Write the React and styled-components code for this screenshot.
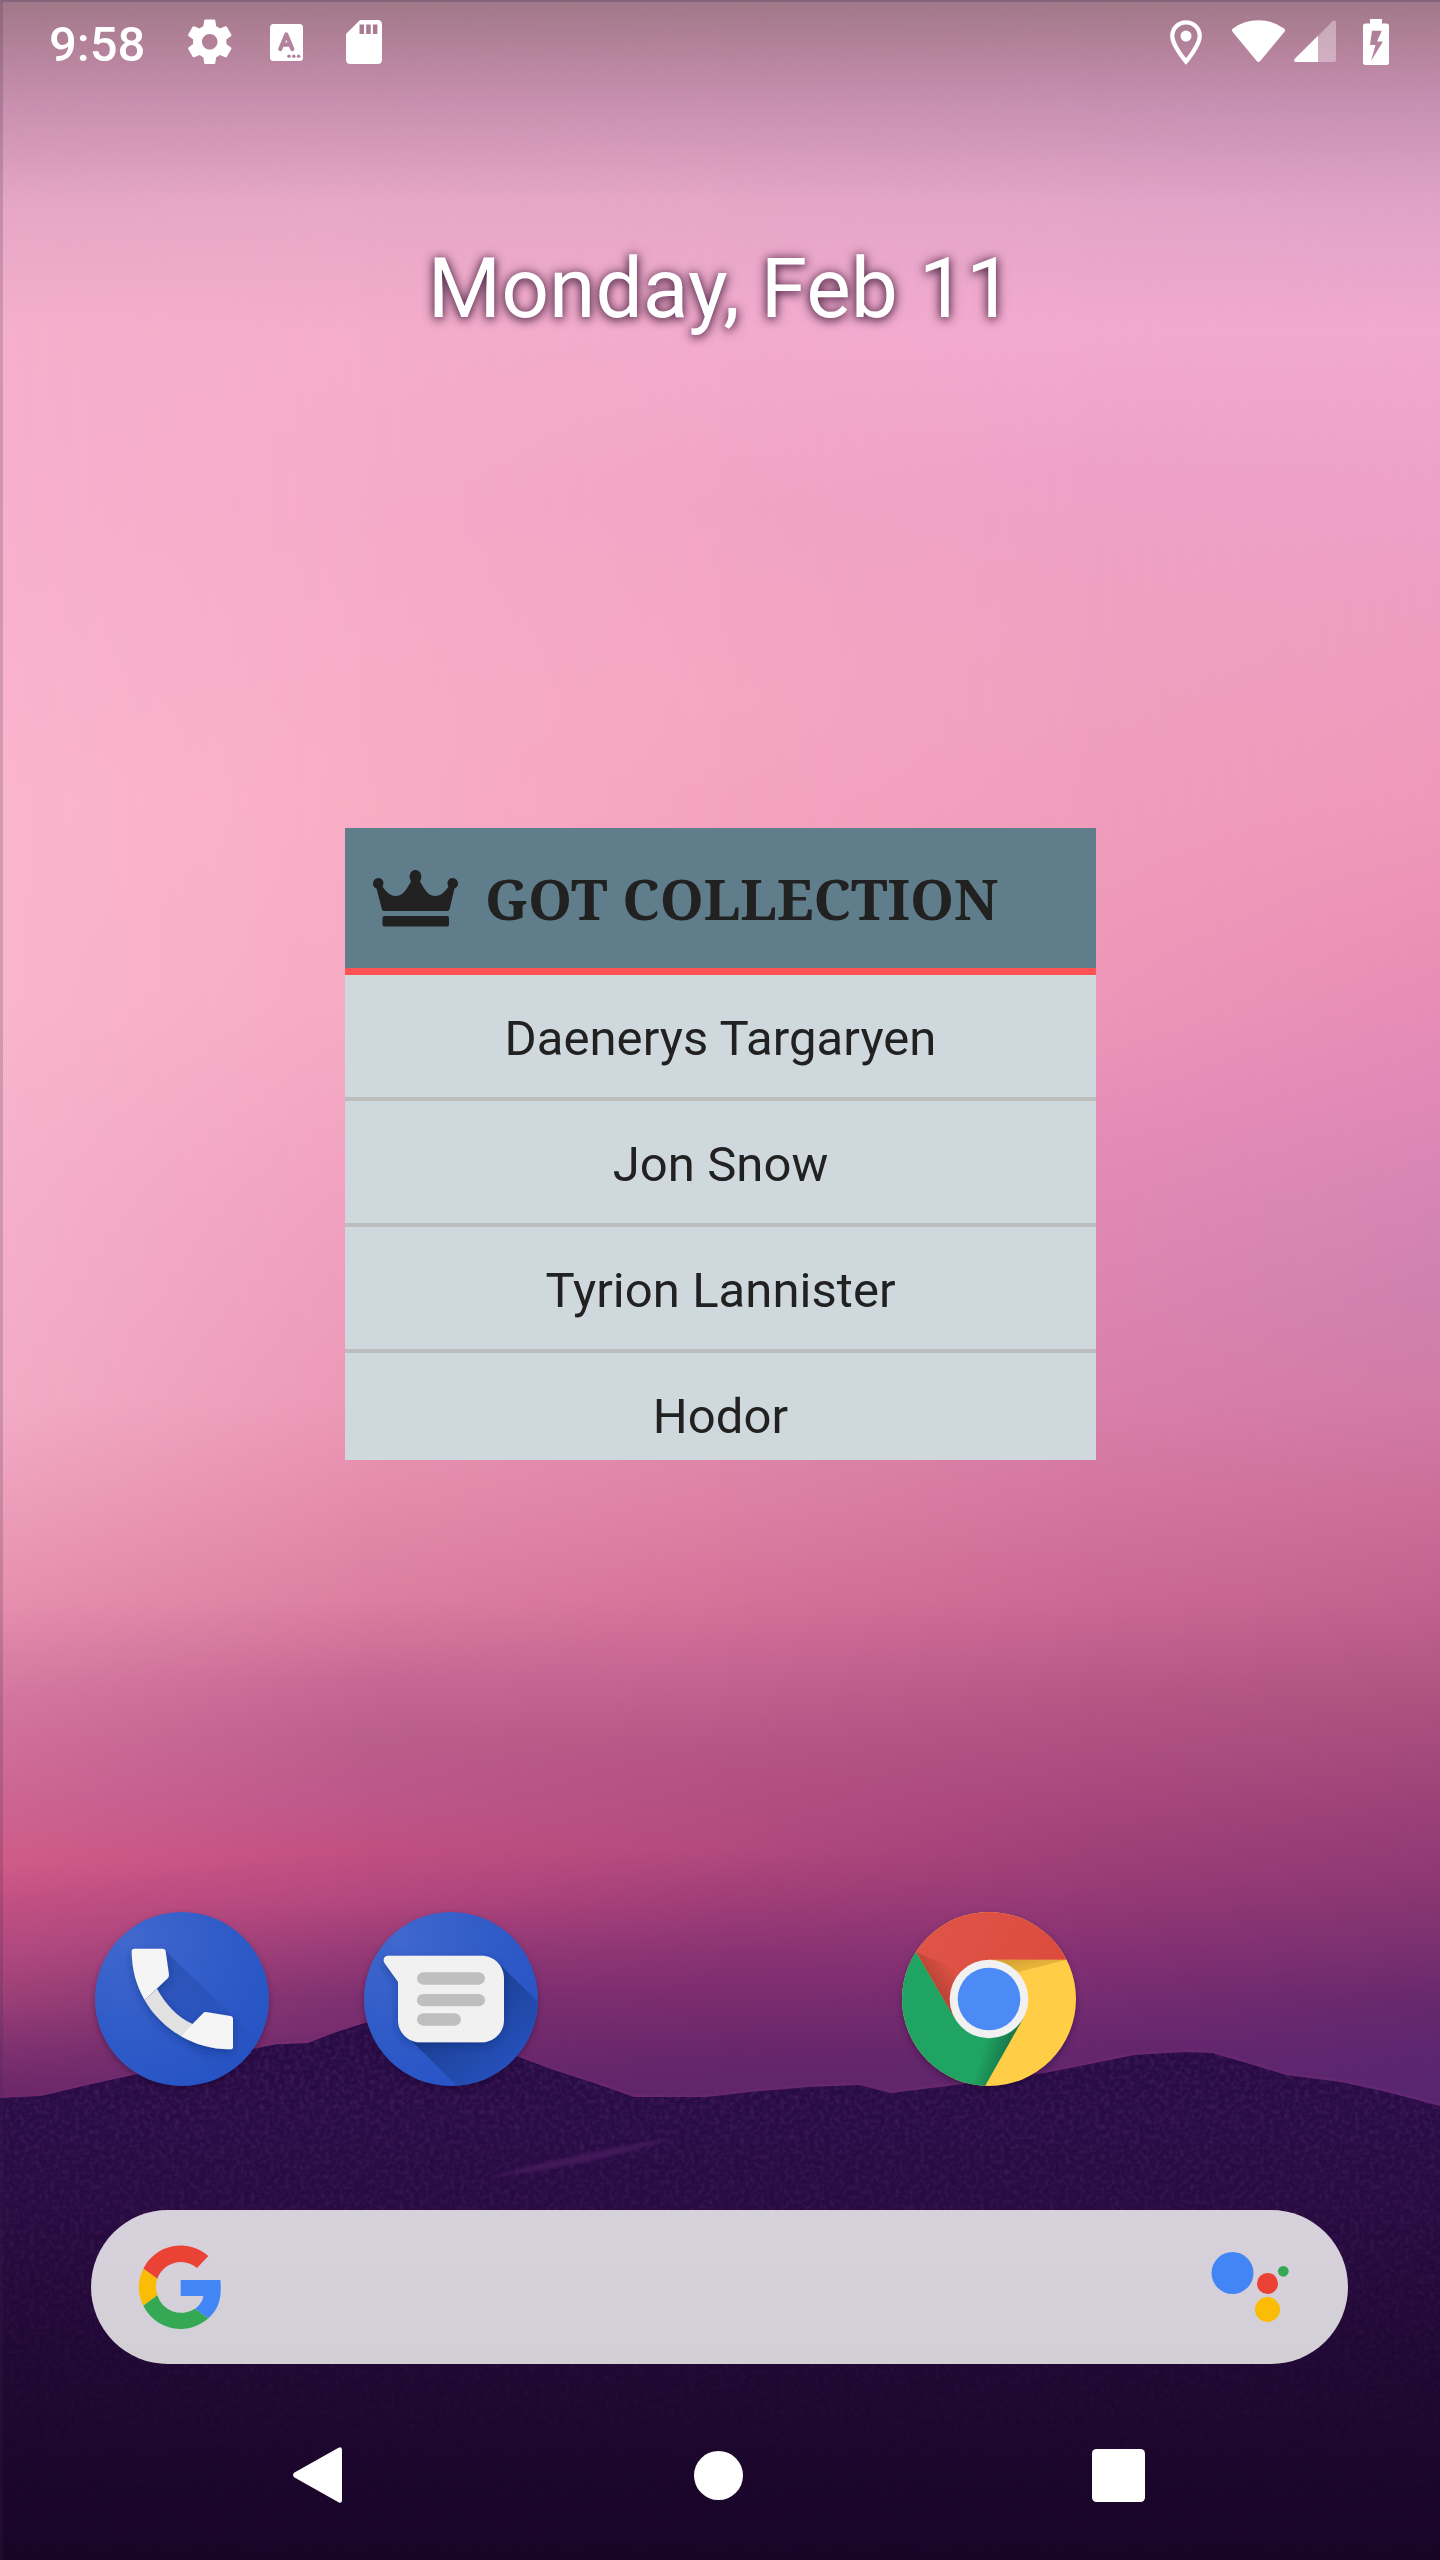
import React from "react";
import styled, { createGlobalStyle } from "styled-components";

const GlobalStyle = createGlobalStyle`
  html, body { margin: 0; padding: 0; background: #190525; }
  * { box-sizing: border-box; }
`;

/* ---------- wallpaper ---------- */

const columns = [
  [[0, "#a07888"], [50, "#b5839c"], [100, "#c78fad"], [200, "#e5a6c5"], [330, "#f5b0cc"], [500, "#f7b0cd"], [800, "#fab6cd"], [1000, "#f9b6cc"], [1200, "#f5b0ca"], [1400, "#f3acc5"], [1500, "#ed9fba"], [1600, "#e790ae"], [1700, "#d3769f"], [1800, "#cd6592"], [1860, "#d05c89"], [1900, "#c35183"], [1950, "#b14a80"], [2000, "#9b3f77"], [2050, "#7e3170"], [2095, "#6c2769"]],
  [[0, "#a07888"], [50, "#b5839c"], [100, "#c78fad"], [200, "#e6a7c6"], [330, "#f4adcb"], [500, "#f5abc9"], [800, "#f9adc5"], [1000, "#f6aac4"], [1200, "#f0a0bf"], [1400, "#eb98b6"], [1500, "#e58caa"], [1600, "#db7fa0"], [1680, "#c76894"], [1740, "#bb5e8b"], [1800, "#bd578a"], [1850, "#c15081"], [1900, "#b4477f"], [1950, "#973b77"], [2000, "#7d3070"], [2080, "#67276a"]],
  [[0, "#a07888"], [50, "#b5839c"], [100, "#c78fae"], [200, "#e5a6c6"], [330, "#f2abcd"], [500, "#f2a4c5"], [700, "#f5a6c1"], [820, "#f4a3bf"], [1200, "#e998b6"], [1400, "#e28bac"], [1500, "#dd81a5"], [1600, "#d57399"], [1680, "#c36391"], [1750, "#b55585"], [1850, "#b24a7e"], [1900, "#a03e78"], [1950, "#8b3474"], [2000, "#7a2c6e"], [2060, "#66266b"], [2100, "#5f256a"]],
  [[0, "#a07888"], [50, "#b5839c"], [100, "#c68fb0"], [200, "#e2a4c7"], [330, "#f2aacf"], [480, "#eea1c7"], [650, "#f0a0c0"], [820, "#f09dbc"], [1000, "#ee97b9"], [1150, "#e48cb7"], [1300, "#dd85b1"], [1400, "#da80aa"], [1500, "#d3759f"], [1600, "#cb6a94"], [1700, "#b55685"], [1800, "#a8477d"], [1880, "#9a3c76"], [1950, "#863174"], [2000, "#752c71"], [2050, "#66266d"], [2100, "#5d266c"]],
  [[0, "#a07888"], [50, "#b5839c"], [100, "#c58fb1"], [200, "#dfa2c8"], [330, "#f1a9ce"], [480, "#eda1c9"], [600, "#ee9dc1"], [800, "#ef99b9"], [950, "#ea8fb5"], [1100, "#e088b7"], [1200, "#d585b3"], [1300, "#cf80ad"], [1400, "#d17ba6"], [1500, "#cb6e98"], [1600, "#c1628e"], [1700, "#ad527f"], [1800, "#9c4279"], [1880, "#8d3873"], [1950, "#78306f"], [2000, "#67286c"], [2060, "#5c2671"], [2110, "#582770"]],
];

const WallpaperLayer = styled.div`
  position: absolute;
  inset: 0;
  z-index: -1;
  background: #66266a;
`;

const SkyColumn = styled.div`
  position: absolute;
  inset: 0;
  background: linear-gradient(to bottom, ${(p) => p.$stops.map(([y, c]) => `${c} ${y}px`).join(", ")});
  ${(p) =>
    p.$index > 0 &&
    `mask-image: linear-gradient(to right, transparent ${(p.$index - 1) * 360}px, #000 ${p.$index * 360}px);`}
`;

const Ridge = styled.svg`
  position: absolute;
  left: 0;
  bottom: 0;
  display: block;
`;

const ScreenEdge = styled.div`
  position: absolute;
  inset: 0;
  border-top: 2px solid rgba(60, 40, 80, 0.25);
  border-left: 3px solid rgba(60, 40, 70, 0.2);
`;

function Wallpaper() {
  const outline =
    "M0 98L41 96L92 84L138 74L190 64L248 50L275 44.5L308 43L335 32.500L365 23L400 19L440 24L480 40L519 57L551 69L597 84L634 97L707 97L750 92L808 87L859 85L891 93L964 84L1047 72.600L1095 63L1134 55L1185 52L1212 53L1250 64L1286 75L1341 82L1387 92L1440 106V580H0Z";
  return (
    <WallpaperLayer>
      {columns.map((stops, i) => (
        <SkyColumn key={i} $stops={stops} $index={i} />
      ))}
      <Ridge width="1440" height="560" viewBox="0 0 1440 560">
        <defs>
          <linearGradient id="ground" x1="0" y1="0" x2="0" y2="560" gradientUnits="userSpaceOnUse">
            <stop offset="0.03" stopColor="#270a44" />
            <stop offset="0.2" stopColor="#290c46" />
            <stop offset="0.38" stopColor="#270b41" />
            <stop offset="0.67" stopColor="#1f0832" />
            <stop offset="1" stopColor="#180526" />
          </linearGradient>
          <linearGradient id="grainFade" x1="0" y1="0" x2="0" y2="1">
            <stop offset="0" stopColor="#fff" />
            <stop offset="0.4" stopColor="#fff" stopOpacity="0.6" />
            <stop offset="0.8" stopColor="#fff" stopOpacity="0.1" />
          </linearGradient>
          <mask id="grainMask">
            <path d={outline} fill="url(#grainFade)" />
          </mask>
          <filter id="grain" x="0" y="0" width="100%" height="100%">
            <feTurbulence type="fractalNoise" baseFrequency="0.2" numOctaves="3" seed="4" />
            <feColorMatrix values="0 0 0 0 0.36  0 0 0 0 0.12  0 0 0 0 0.38  1.6 0 0 0 -0.62" />
          </filter>
          <filter id="soft"><feGaussianBlur stdDeviation="1.6" /></filter>
        </defs>
        <g transform="translate(0 -2)">
          <path d={outline} fill="none" stroke="#7a2f78" strokeWidth="3" opacity="0.5" filter="url(#soft)" transform="translate(0 2)" />
          <path d={outline} fill="url(#ground)" transform="translate(0 2)" />
        </g>
        <g mask="url(#grainMask)"><rect width="1440" height="560" filter="url(#grain)" opacity="0.26" /></g>
        <path d="M486 178Q560 156 676 137Q600 164 486 178Z" fill="#4a1b60" opacity="0.75" filter="url(#soft)" />
      </Ridge>
      <ScreenEdge />
    </WallpaperLayer>
  );
}

/* ---------- layout ---------- */

const Screen = styled.main`
  position: relative;
  z-index: 0;
  display: flex;
  flex-direction: column;
  width: 1440px;
  height: 2560px;
  overflow: hidden;
  font-family: Roboto, "Liberation Sans", sans-serif;
`;

const Icon = styled.svg`
  display: block;
  flex: none;
  overflow: visible;
`;

const StatusBar = styled.header`
  display: flex;
  justify-content: space-between;
  height: 84px;
  padding: 0 51px 0 49px;
  color: #fff;
`;

const StatusGroup = styled.div`
  display: flex;
  align-items: center;
`;

const Clock = styled.time`
  width: 122px;
  padding-top: 5px;
  font-size: 49px;
  font-weight: 500;
  line-height: 58px;
`;

const NotificationSlot = styled.span`
  display: flex;
  justify-content: center;
  width: 77px;
`;

const SystemIcon = styled(Icon)`
  margin-left: ${(p) => p.$gap}px;
`;

const DateLabel = styled.h1`
  margin: 156px 0 0;
  padding-left: 1px;
  font-size: 84px;
  font-weight: 400;
  line-height: 98px;
  height: 98px;
  text-align: center;
  color: #fff;
  text-shadow: 0 1px 12px rgba(50, 15, 45, 0.75), 0 2px 8px rgba(50, 15, 45, 0.55);
`;

const Widget = styled.section`
  width: 751px;
  height: 632px;
  margin: 490px 0 0 345px;
  overflow: hidden;
  background: #cfd8dd;
  color: #212121;
`;

const WidgetHeader = styled.header`
  display: flex;
  align-items: center;
  gap: 27px;
  height: 147px;
  padding-left: 28px;
  border-bottom: 7px solid #ff5252;
  background: #607d8b;
`;

const WidgetTitle = styled.h2`
  margin: 0;
  font-family: "Noto Serif", "DejaVu Serif Condensed", "DejaVu Serif", serif;
  font-size: 56px;
  font-weight: 700;
  line-height: 76px;
  white-space: nowrap;
`;

const NameList = styled.ul`
  margin: 0;
  padding: 0;
  list-style: none;
`;

const NameRow = styled.li`
  height: 126px;
  padding-top: 5px;
  border-bottom: 4px solid #bdbdbd;
  font-size: 49px;
  line-height: 118px;
  letter-spacing: 0.05px;
  text-align: center;
`;

const Dock = styled.nav`
  display: grid;
  grid-template-columns: repeat(5, 269px);
  justify-content: center;
  justify-items: center;
  height: 174px;
  margin-top: 452px;
`;

const AppIcon = styled(Icon)`
  grid-column: ${(p) => p.$column};
  border-radius: 50%;
  overflow: hidden;
  box-shadow: 0 3px 6px rgba(20, 0, 40, 0.35);
`;

const SearchBar = styled.div`
  display: flex;
  align-items: center;
  justify-content: space-between;
  width: 1257px;
  height: 154px;
  margin: 124px 0 0 91px;
  padding: 0 59px 0 48px;
  border-radius: 77px;
  background: linear-gradient(#d7d1dc, #d5d0da 50%, #d2d0d5);
`;

const NavBar = styled.nav`
  display: flex;
  justify-content: space-between;
  align-items: center;
  height: 56px;
  margin-top: 83px;
  padding: 0 295px 0 292px;
`;

const HomeButton = styled(Icon)`
  margin-left: 3px;
`;

/* ---------- app icons ---------- */

const PhoneIcon = () => (
  <AppIcon $column={1} width="174" height="174" viewBox="45 66 522 522">
    <defs>
      <radialGradient id="blueDisc" cx="0.2" cy="0.15" r="0.95">
        <stop offset="0" stopColor="#4068cd" />
        <stop offset="0.6" stopColor="#2f5bc8" />
        <stop offset="1" stopColor="#2754c5" />
      </radialGradient>
      <linearGradient id="phoneShade" x1="240" y1="230" x2="440" y2="530" gradientUnits="userSpaceOnUse">
        <stop offset="0" stopColor="#1c3e9a" stopOpacity="0.4" />
        <stop offset="1" stopColor="#1c3e9a" stopOpacity="0.05" />
      </linearGradient>
      <filter id="lift" x="-30%" y="-30%" width="160%" height="160%">
        <feDropShadow dx="0" dy="10" stdDeviation="12" floodColor="#102a70" floodOpacity="0.4" />
      </filter>
    </defs>
    <rect x="45" y="66" width="522" height="522" fill="url(#blueDisc)" />
    <path d="M255 182L560 472L440 600L302 438L194 330Z" fill="url(#phoneShade)" />
    <g filter="url(#lift)">
      <path d="M194 330L231 296C255 340 290 380 339 403L302 438C255 410 220 375 194 330Z" fill="#e1e1e1" />
      <path d="M163 176H248Q256 176 257 184L267 255Q267 260 264 264L194 330C168 285 156 240 155 184Q155 176 163 176Z" fill="#f5f5f5" />
      <path d="M378 366L451 378Q459 379 459 387V470Q459 478 450 478C395 478 345 463 302 438L370 369Q373 365 378 366Z" fill="#f5f5f5" />
    </g>
  </AppIcon>
);

const MessagesIcon = () => (
  <AppIcon $column={2} width="174" height="174" viewBox="852 66 522 522">
    <defs>
      <linearGradient id="messageShade" x1="1120" y1="330" x2="1290" y2="520" gradientUnits="userSpaceOnUse">
        <stop offset="0" stopColor="#1c3f91" />
        <stop offset="1" stopColor="#2550ba" />
      </linearGradient>
    </defs>
    <rect x="852" y="66" width="522" height="522" fill="url(#blueDisc)" />
    <path d="M1250 215L1400 360V600H1143L980 437Z" fill="url(#messageShade)" />
    <g filter="url(#lift)">
      <path d="M924 197H1205C1242 197 1272 227 1272 264V390C1272 427 1242 457 1205 457H1021C984 457 954 427 954 390V275L915 221C907 210 912 197 924 197Z" fill="#f1f1f1" />
    </g>
    <g fill="#bfbfbf">
      <rect x="1011" y="247" width="204" height="37" rx="18.5" />
      <rect x="1011" y="312" width="204" height="37" rx="18.5" />
      <rect x="1011" y="370" width="132" height="37" rx="18.5" />
    </g>
  </AppIcon>
);

const ChromeIcon = () => (
  <AppIcon $column={4} width="174" height="174" viewBox="66 66 522 522">
    <defs>
      <linearGradient id="redShade" x1="165" y1="285" x2="225" y2="242" gradientUnits="userSpaceOnUse">
        <stop offset="0" stopColor="#9c3a2c" stopOpacity="0.55" />
        <stop offset="1" stopColor="#9c3a2c" stopOpacity="0" />
      </linearGradient>
      <linearGradient id="yellowShade" x1="400" y1="209" x2="415" y2="275" gradientUnits="userSpaceOnUse">
        <stop offset="0" stopColor="#b98525" stopOpacity="0.6" />
        <stop offset="1" stopColor="#b98525" stopOpacity="0.1" />
      </linearGradient>
      <linearGradient id="greenShade" x1="378" y1="490" x2="310" y2="470" gradientUnits="userSpaceOnUse">
        <stop offset="0" stopColor="#176b43" stopOpacity="0.75" />
        <stop offset="1" stopColor="#176b43" stopOpacity="0" />
      </linearGradient>
      <linearGradient id="red" x1="0" y1="0" x2="1" y2="0.3">
        <stop offset="0" stopColor="#e0574a" />
        <stop offset="1" stopColor="#dc4a3d" />
      </linearGradient>
    </defs>
    <rect x="66" y="66" width="522" height="522" fill="#ffcd46" />
    <path d="M108 186L40 60H600V209H327L225 386Z" fill="url(#red)" />
    <path d="M108 186L225 386L429 386L315 588H40V60Z" fill="#1fa463" />
    <path d="M225 386L429 386L315 588H250Z" fill="url(#greenShade)" />
    <path d="M108 186L218 375L260 250Z" fill="url(#redShade)" />
    <path d="M327 209H561L400 250Z" fill="url(#yellowShade)" />
    <circle cx="327" cy="327" r="118" fill="#f1f1f1" />
    <circle cx="327" cy="327" r="94" fill="#4c8bf5" />
  </AppIcon>
);

const GoogleLogo = () => (
  <Icon width="82" height="84" viewBox="178 165 246 252">
    <path d="M386 198A125 126 0 0 0 191 236L233 266A75 75 0 0 1 352 234Z" fill="#ea4335" />
    <path d="M191 236A126 126 0 0 0 191 347L233 316A75 75 0 0 1 233 266Z" fill="#fbbc05" />
    <path d="M191 347A125 126 0 0 0 386 385L346 356A75 75 0 0 1 233 316Z" fill="#34a853" />
    <path d="M303 270H422C427 320 419 356 386 385L346 356C360 346 369 334 371 318H303Z" fill="#4285f4" />
  </Icon>
);

const AssistantLogo = () => (
  <Icon width="78" height="70" viewBox="1211 2252 78 70">
    <circle cx="1232.5" cy="2273" r="21" fill="#4285f4" />
    <circle cx="1267.5" cy="2283.5" r="10.5" fill="#ea4335" />
    <circle cx="1283.3" cy="2271.3" r="5.4" fill="#34a853" />
    <circle cx="1267.5" cy="2309.5" r="12.5" fill="#fbbc05" />
  </Icon>
);

const names = ["Daenerys Targaryen", "Jon Snow", "Tyrion Lannister", "Hodor"];

export default function App() {
  return (
    <>
      <GlobalStyle />
      <Screen>
        <Wallpaper />

        <StatusBar>
          <StatusGroup>
            <Clock>9:58</Clock>
            <NotificationSlot>
              <Icon width="53.5" height="53.5" viewBox="0 0 24 24" fill="#fff">
                <path d="M19.43 12.98c.04-.32.07-.64.07-.98s-.03-.66-.07-.98l2.11-1.65c.19-.15.24-.42.12-.64l-2-3.46c-.12-.22-.39-.3-.61-.22l-2.49 1c-.52-.4-1.08-.73-1.69-.98l-.38-2.65C14.46 2.18 14.25 2 14 2h-4c-.25 0-.46.18-.49.42l-.38 2.65c-.61.25-1.17.59-1.69.98l-2.49-1c-.23-.09-.49 0-.61.22l-2 3.46c-.13.22-.07.49.12.64l2.11 1.65c-.04.32-.07.65-.07.98s.03.66.07.98l-2.11 1.65c-.19.15-.24.42-.12.64l2 3.46c.12.22.39.3.61.22l2.49-1c.52.4 1.08.73 1.69.98l.38 2.65c.03.24.24.42.49.42h4c.25 0 .46-.18.49-.42l.38-2.65c.61-.25 1.17-.59 1.69-.98l2.49 1c.23.09.49 0 .61-.22l2-3.46c.12-.22.07-.49-.12-.64l-2.11-1.65zM12 15.5c-1.93 0-3.5-1.57-3.5-3.5s1.57-3.5 3.5-3.5 3.5 1.57 3.5 3.5-1.57 3.5-3.5 3.5z" />
              </Icon>
            </NotificationSlot>
            <NotificationSlot>
              <Icon width="33" height="37" viewBox="0 0 33 37">
                <rect width="33" height="37" rx="3.5" fill="#fff" />
                <path d="M10.3 25L16.3 10.5L22.3 25M12.3 20.7H20.3" fill="none" stroke="#b3839d" strokeWidth="4.2" strokeLinecap="round" strokeLinejoin="round" />
                <g fill="#b3839d">
                  <circle cx="19" cy="32.3" r="1.8" />
                  <circle cx="23.8" cy="32.3" r="1.8" />
                  <circle cx="28.6" cy="32.3" r="1.8" />
                </g>
              </Icon>
            </NotificationSlot>
            <NotificationSlot>
              <Icon width="36" height="44" viewBox="0 0 36 44">
                <path d="M14 0H31.500Q36 0 36 4.500V39.500Q36 44 31.500 44H4.500Q0 44 0 39.500V14Z" fill="#fff" />
                <path d="M13.500 4.500h4.500v9.500h-4.500zM20.200 4.500h4.500v9.500h-4.500zM26.900 4.500h4.500v9.500h-4.500z" fill="#a97b92" />
              </Icon>
            </NotificationSlot>
          </StatusGroup>
          <StatusGroup>
            <SystemIcon $gap={0} width="32" height="45" viewBox="0 0 32 45">
              <path d="M16 2.300C8.400 2.300 2.300 8.300 2.300 16C2.300 25.500 16 41.500 16 41.500S29.700 25.500 29.700 16C29.700 8.300 23.600 2.300 16 2.300Z" fill="none" stroke="#fff" strokeWidth="4.300" />
              <circle cx="16" cy="16" r="5.500" fill="#fff" />
            </SystemIcon>
            <SystemIcon $gap={30.5} width="53" height="44" viewBox="0 0 53 44">
              <path d="M1 8.500Q12 0.300 26.500 0.300T52 8.500Q53.800 10 52.300 12L28.300 41Q26.500 43 24.700 41L0.700 12Q-0.800 10 1 8.500Z" fill="#fff" />
            </SystemIcon>
            <SystemIcon $gap={9} width="42" height="40" viewBox="0 2 42 40">
              <path d="M24 16L38.500 1.200Q42 -1 42 3V40Q42 42 40 42H24Z" fill="#fff" opacity="0.35" />
              <path d="M24 15.800V42H2.500Q-1.500 42 1 38.500Z" fill="#fff" />
            </SystemIcon>
            <SystemIcon $gap={27} width="26" height="46" viewBox="0 0 26 46">
              <path fillRule="evenodd" d="M7 0H19V4.500H23.500Q26 4.500 26 7V43.500Q26 46 23.500 46H2.500Q0 46 0 43.500V7Q0 4.500 2.500 4.500H7ZM9 11.800L7 26H12.500L8 42L20 22.500H14L18.800 11.800Z" fill="#fff" />
            </SystemIcon>
          </StatusGroup>
        </StatusBar>

        <DateLabel>Monday, Feb 11</DateLabel>

        <Widget>
          <WidgetHeader>
            <Icon width="85" height="57" viewBox="0 0 85 57" fill="#212121">
              <path d="M42.500 0C47.500 0 49.500 6 47.800 9.500L47 11.500C50.500 17 54 26 62 26C69 26 73 20 75.500 16.500C73 12.500 75.500 8 79.500 8C86 8 87 17 81.500 18.500L76.500 39.500Q76 41 74.500 41H11Q9.500 41 9 39.500L3.500 18.500C-2 17 -1 8 5.500 8C9.500 8 12 12.500 9.500 16.500C12 20 16 26 23 26C31 26 34.500 17 38 11.500L37.200 9.500C35.500 6 37.500 0 42.500 0Z" />
              <rect x="9.500" y="46" width="66.500" height="10.500" rx="2" />
            </Icon>
            <WidgetTitle>GOT COLLECTION</WidgetTitle>
          </WidgetHeader>
          <NameList>
            {names.map((name) => (
              <NameRow key={name}>{name}</NameRow>
            ))}
          </NameList>
        </Widget>

        <Dock>
          <PhoneIcon />
          <MessagesIcon />
          <ChromeIcon />
        </Dock>

        <SearchBar>
          <GoogleLogo />
          <AssistantLogo />
        </SearchBar>

        <NavBar>
          <Icon width="50" height="56" viewBox="0 0 50 56" fill="#fff">
            <path d="M46.500 0.700Q50 -1 50 3V53Q50 57 46.500 55.300L2.500 30.500Q-0.500 28 2.500 25.500Z" />
          </Icon>
          <HomeButton width="49" height="49" viewBox="0 0 49 49" fill="#fff">
            <circle cx="24.500" cy="24.500" r="24.500" />
          </HomeButton>
          <Icon width="53" height="53" viewBox="0 0 53 53" fill="#fff">
            <rect width="53" height="53" rx="4.500" />
          </Icon>
        </NavBar>
      </Screen>
    </>
  );
}
